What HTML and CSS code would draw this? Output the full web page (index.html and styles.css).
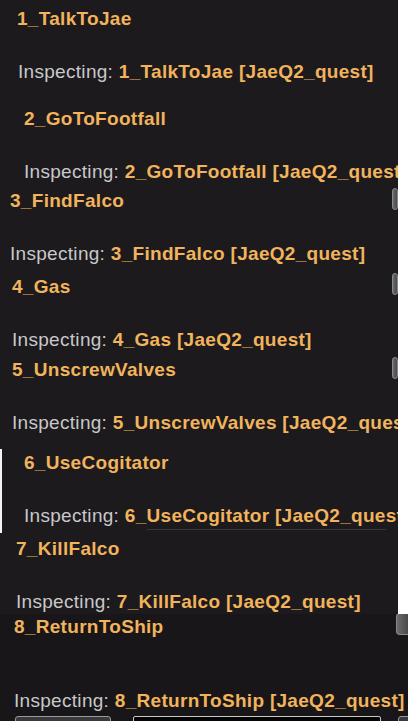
FILE: index.html
```html
<!DOCTYPE html>
<html lang="en">
<head>
<meta charset="utf-8">
<title>Quest stages</title>
<link rel="stylesheet" href="styles.css">
</head>
<body>
<main class="stack">
  <section class="strip s1">
    <div class="body">
      <div class="title">1_TalkToJae</div>
      <div class="insp"><span class="lbl">Inspecting: </span><b>1_TalkToJae [JaeQ2_quest]</b></div>
    </div>
  </section>
  <section class="strip s2">
    <div class="body">
      <div class="title">2_GoToFootfall</div>
      <div class="insp"><span class="lbl">Inspecting: </span><b>2_GoToFootfall [JaeQ2_quest]</b></div>
    </div>
  </section>
  <section class="strip s3">
    <div class="body">
      <div class="title">3_FindFalco</div>
      <div class="insp"><span class="lbl">Inspecting: </span><b>3_FindFalco [JaeQ2_quest]</b></div>
    </div>
    <div class="thumb"></div>
  </section>
  <section class="strip s4">
    <div class="body">
      <div class="title">4_Gas</div>
      <div class="insp"><span class="lbl">Inspecting: </span><b>4_Gas [JaeQ2_quest]</b></div>
    </div>
    <div class="thumb"></div>
  </section>
  <section class="strip s5">
    <div class="body">
      <div class="title">5_UnscrewValves</div>
      <div class="insp"><span class="lbl">Inspecting: </span><b>5_UnscrewValves [JaeQ2_quest]</b></div>
    </div>
    <div class="thumb"></div>
  </section>
  <section class="strip s6">
    <div class="body">
      <div class="title">6_UseCogitator</div>
      <div class="insp"><span class="lbl">Inspecting: </span><b>6_UseCogitator [JaeQ2_quest]</b></div>
    </div>
    <div class="rule"></div>
  </section>
  <section class="strip s7">
    <div class="body">
      <div class="title">7_KillFalco</div>
      <div class="insp"><span class="lbl">Inspecting: </span><b>7_KillFalco [JaeQ2_quest]</b></div>
    </div>
  </section>
  <section class="strip s8">
    <div class="body">
      <div class="title">8_ReturnToShip</div>
      <div class="insp"><span class="lbl">Inspecting: </span><b>8_ReturnToShip [JaeQ2_quest]</b></div>
      <div class="controls">
        <div class="btn"></div>
        <div class="field"></div>
        <div class="btn end"></div>
      </div>
    </div>
    <div class="thumb"></div>
  </section>
</main>
</body>
</html>
```

FILE: styles.css
```css
html, body {
  margin: 0;
  padding: 0;
  background: #ffffff;
}

.stack {
  display: flex;
  flex-direction: column;
  width: 408px;
  height: 721px;
  overflow: hidden;
  font-family: "Liberation Sans", Arial, sans-serif;
  font-size: 19px;
  line-height: 22px;
  letter-spacing: 0.3px;
}

.strip {
  position: relative;
  display: flex;
  width: 398px;
  background: #1c1a1d;
  overflow: hidden;
  flex: none;
  box-sizing: border-box;
}

.body {
  flex: 1;
  min-width: 0;
  display: flex;
  flex-direction: column;
  gap: 31px;
  white-space: nowrap;
  overflow: hidden;
}

.title {
  color: #f1b35c;
  font-weight: bold;
}

.insp b {
  color: #f1b35c;
  font-weight: bold;
}

.lbl {
  color: #c9c8ca;
}

/* scrollbar thumb overlaying the pane's right edge */
.thumb {
  position: absolute;
  top: 0;
  right: 0;
  width: 6px;
  height: 22px;
  border-radius: 3px;
  background: linear-gradient(90deg, #6a6a6c, #4a4a4c);
  border: 1px solid #8a8a8c;
  box-sizing: border-box;
}

.s1 { height: 95px; }
.s1 .body { padding: 8px 0 0 17px; }
.s1 .insp { margin-left: 1px; }

.s2 { height: 93px; }
.s2 .body { padding: 13px 0 0 24px; }

.s3 { height: 85px; }
.s3 .body { padding: 2px 0 0 10px; }

.s4 { height: 84px; }
.s4 .body { padding: 3px 0 0 12px; }

.s5 { height: 92px; }
.s5 .body { padding: 2px 0 0 12px; }

.s6 {
  height: 84px;
  border-left: 2px solid #f4f4f4;
}
.s6 .body { padding: 3px 0 0 22px; }
.s6 .rule {
  position: absolute;
  left: 145px;
  right: 12px;
  bottom: 3px;
  height: 1px;
  background: #3a383b;
}

.s7 { height: 81px; }
.s7 .body { padding: 5px 0 0 16px; }

.s8 {
  height: 107px;
  width: 408px;
  background: #181618;
}
.s8 .body { padding: 2px 0 0 14px; gap: 0; }
.s8 .insp { margin-top: 52px; }
.s8 .thumb {
  width: 12px;
  height: 22px;
  top: -1px;
  border-radius: 4px 0 0 4px;
  border-right: none;
}

.controls {
  display: flex;
  gap: 22px;
  margin-top: 4px;
  padding-left: 1px;
}
.btn {
  flex: none;
  width: 94px;
  height: 10px;
  border: 1px solid #9a9a9a;
  border-radius: 3px;
  background: #3a3a3c;
}
.btn.end {
  width: 20px;
  margin-left: -5px;
}
.field {
  flex: none;
  width: 246px;
  height: 10px;
  border: 1px solid #c8c8c8;
  border-radius: 2px;
  background: #050505;
}
```
